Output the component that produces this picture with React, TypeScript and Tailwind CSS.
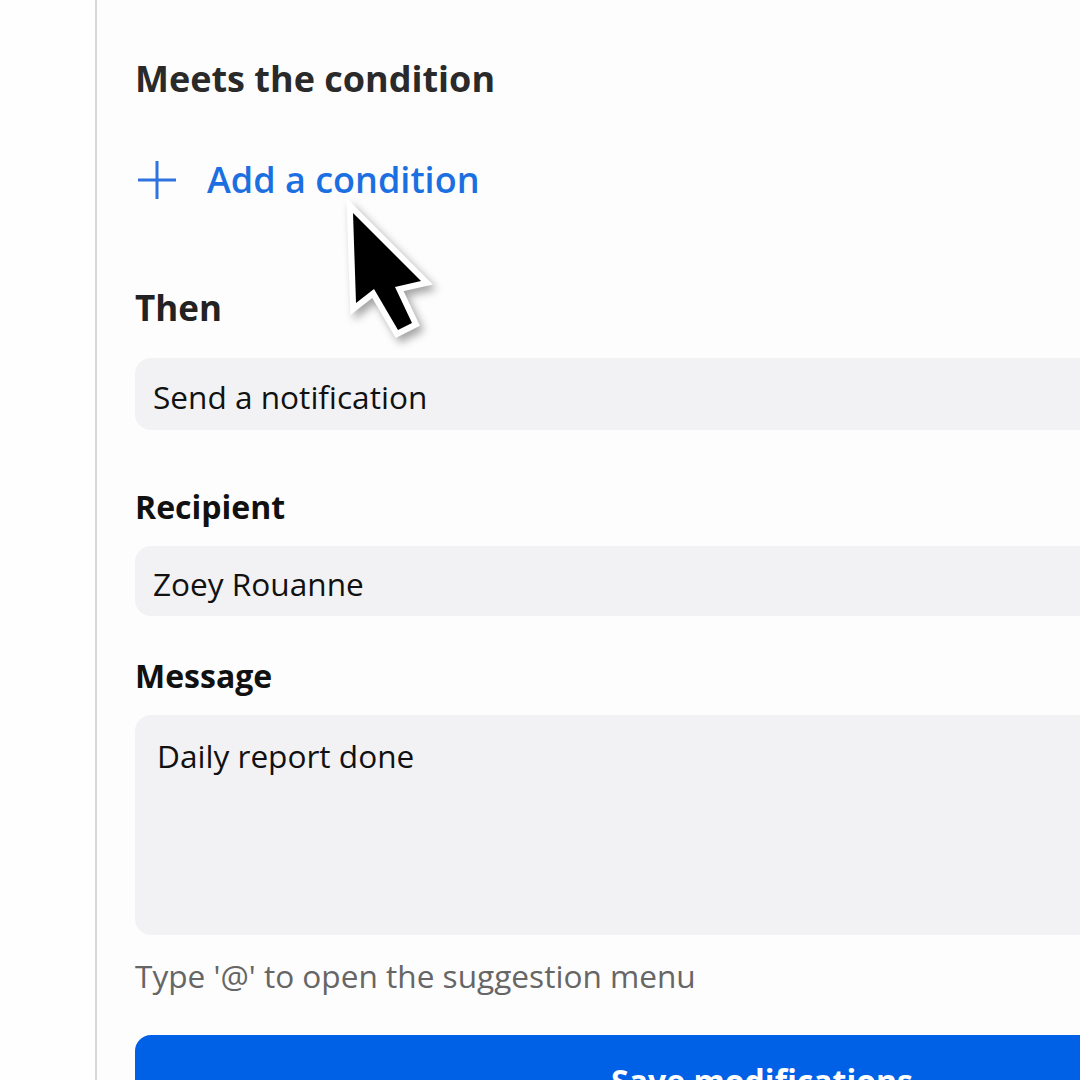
import React from 'react';

// ============================================
// Cursor overlay
// ============================================

function Cursor() {
  return (
    <svg
      className="absolute left-[330px] top-[195px] drop-shadow-[4px_5px_4px_rgba(0,0,0,0.35)]"
      width="130"
      height="160"
      viewBox="0 0 130 160"
    >
      <polygon
        points="23,18 26,108 44,94 68,135 82,128 65,92 91,86"
        fill="#000"
        stroke="#fff"
        strokeWidth={12}
        strokeLinejoin="miter"
        paintOrder="stroke"
      />
    </svg>
  );
}

// ============================================
// Field box
// ============================================

function Field({ children, className }: { children: React.ReactNode; className: string }) {
  return (
    <div className={`shrink-0 rounded-[16px] bg-[#f2f2f4] text-[31.6px] leading-[44px] text-[#111] ${className}`}>
      {children}
    </div>
  );
}

export default function App() {
  return (
    <div
      className="relative h-[1080px] w-[1080px] overflow-hidden bg-[#fdfdfd] flex"
      style={{ fontFamily: '"Open Sans", "Noto Sans", sans-serif' }}
    >
      {/* Left strip + divider */}
      <div className="w-[95px] shrink-0 bg-[#fefefe]" />
      <div className="w-[2px] shrink-0 bg-[#d8d8d8]" />

      {/* Form */}
      <div className="flex-1 flex flex-col pl-[38px] -mr-[60px]">
        <h2 className="shrink-0 mt-[55px] text-[36px] leading-[48px] font-bold text-[#2a2a2a]">
          Meets the condition
        </h2>

        <button className="shrink-0 mt-[52px] flex items-center gap-[30px] self-start">
          <svg width="40" height="40" viewBox="0 0 40 40" className="ml-[2px]">
            <path d="M20 1v38M1 20h38" stroke="#2f73df" strokeWidth={3} />
          </svg>
          <span className="text-[36px] leading-[49px] font-semibold text-[#1c6fe1]">
            Add a condition
          </span>
        </button>

        <h3 className="shrink-0 mt-[80px] text-[35px] leading-[48px] font-bold text-[#222]">Then</h3>
        <Field className="mt-[26px] h-[72px] pt-[17px] pl-[18px]">Send a notification</Field>

        <h3 className="shrink-0 mt-[55px] text-[32px] leading-[44px] font-bold text-[#111]">Recipient</h3>
        <Field className="mt-[17px] h-[70px] pt-[16px] pl-[18px]">Zoey Rouanne</Field>

        <h3 className="shrink-0 mt-[38px] text-[32px] leading-[44px] font-bold text-[#111]">Message</h3>
        <Field className="mt-[17px] h-[220px] pt-[19px] pl-[22px]">Daily report done</Field>

        <p className="shrink-0 mt-[19px] text-[31.6px] leading-[44px] text-[#666]">
          Type '@' to open the suggestion menu
        </p>

        {/* Save button (cut off by the viewport) */}
        <div className="mt-[37px] h-[120px] shrink-0 rounded-[16px] bg-[#0061e6] pt-[24px] pl-[476px] text-[32px] leading-[44px] font-bold text-white">
          Save modifications
        </div>
      </div>

      <Cursor />
    </div>
  );
}
